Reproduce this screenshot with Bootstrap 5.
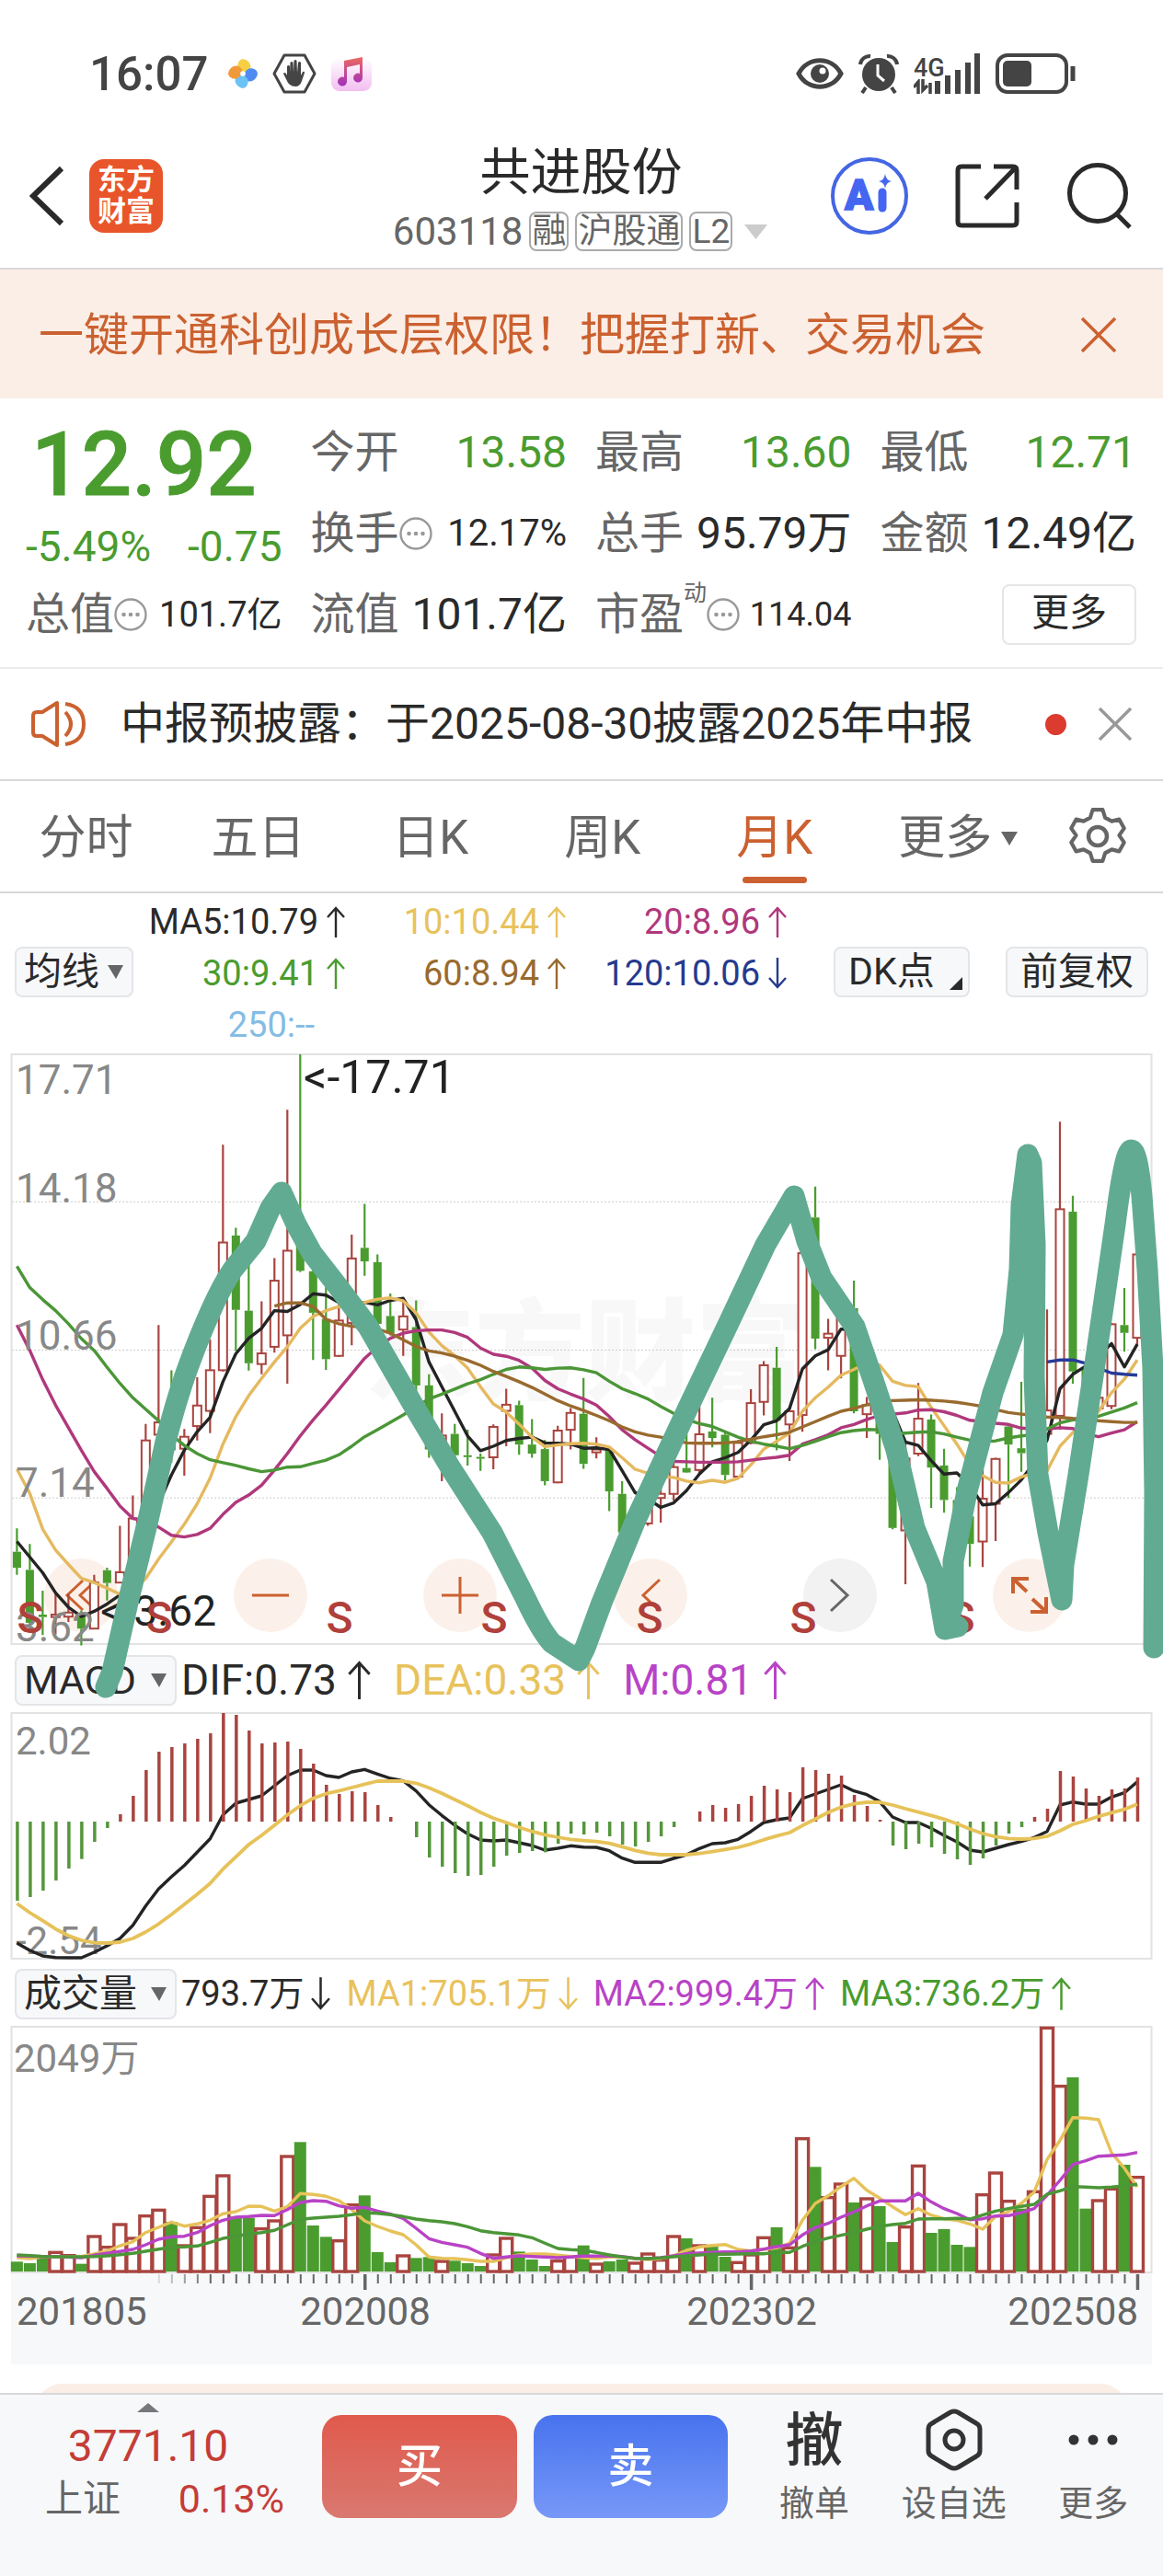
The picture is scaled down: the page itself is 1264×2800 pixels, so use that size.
<!DOCTYPE html>
<html lang="zh-CN">
<head>
<meta charset="utf-8">
<meta name="viewport" content="width=device-width, initial-scale=1">
<title>共进股份 603118</title>
<link href="https://cdn.jsdelivr.net/npm/bootstrap@5.3.0/dist/css/bootstrap.min.css" rel="stylesheet">
<style>
  :root { --up:#a9443f; --down:#4a9c2f; --brand:#cb6130; --ink:#2a2a2a; --mute:#666; --soft:#f7f8fa; }
  body { font-family: Roboto, "Noto Sans CJK SC", sans-serif; color: var(--ink); background: #fff; font-size: 48px; line-height: 1; }
  svg { display: block; flex: none; }
  button { color: inherit; }
  .plain-btn { background: none; border: 0; padding: 0; }
  .c-down { color: var(--down); } .c-mute { color: var(--mute); } .c-brand { color: var(--brand); }
  .c-yel { color: #e8c25c; } .c-mag { color: #b0387c; } .c-brn { color: #996a2e; }
  .c-blu { color: #263a8e; } .c-sky { color: #84bce4; } .c-pur { color: #b843c6; }

  .status { height: 134px; padding: 26px 94px 0 97px; font-size: 51px; color: #444; }
  .clock { font-weight: 500; margin-right: 22px; }
  .net { font-size: 27px; line-height: 24px; font-weight: 500; width: 31px; }

  .topbar { display: grid; grid-template-columns: 1fr auto 1fr; height: 159px; border-bottom: 2px solid #d8d8da; padding: 0 33px 0 32px; }
  .top-tools { gap: 51px; }
  .stock-name { font-size: 55px; line-height: 64px; font-weight: 400; margin: 0; }
  .stock-head { padding-top: 12px; }
  .stock-sub { font-size: 42px; line-height: 62px; color: var(--mute); gap: 7px; padding-top: 2px; }
  .tagbox { font-size: 37px; line-height: 39px; border: 2px solid #aaa; border-radius: 8px; padding: 0 1px; }
  .logo { width: 80px; height: 80px; border-radius: 16px; background: #e9552a; color: #fff; font-size: 31px; line-height: 34px; font-weight: 700; margin-left: 25px; }

  .promo { height: 140px; background: #fbeee6; color: var(--brand); font-size: 49px; padding: 2px 51px 0 42px; }

  .quote { display: grid; grid-template-columns: repeat(4, 1fr); grid-auto-rows: 88px; column-gap: 31px; padding: 15px 29px 13px 28px; border-bottom: 2px solid #ebebeb; }
  .headline { grid-row: span 2; }
  .price { font-size: 96px; line-height: 114px; font-weight: 500; padding-left: 6px; -webkit-text-stroke: 1px currentColor; }
  .chg { font-size: 46px; line-height: 64px; }
  .cell-q { display: flex; align-items: center; justify-content: space-between; white-space: nowrap; }
  .cell-q .lab { color: var(--mute); display: flex; align-items: center; }
  .v-m { font-size: 40px; } .v-s { font-size: 38px; } .v-xs { font-size: 36px; }
  .sup-d { font-size: 25px; align-self: flex-start; margin-top: -12px; }
  .more-btn { font-size: 41px; width: 146px; height: 66px; border: 2px solid #e6e6e6; border-radius: 8px; background: #fff; padding: 0 0 4px; margin-left: auto; }

  .notice { height: 122px; border-bottom: 2px solid #d8d8d8; padding: 0 34px 0 33px; font-size: 48px; }
  .notice-text { padding-left: 34px; }
  .dot { width: 23px; height: 23px; border-radius: 50%; background: #dc3b30; margin-right: 35px; }

  .tabs { height: 122px; border-bottom: 2px solid #d8d8d8; font-size: 51px; padding-right: 25px; }
  .tabs a { color: var(--mute); text-decoration: none; text-align: center; position: relative; line-height: 116px; padding-top: 4px; white-space: nowrap; }
  .tabs .tab-p { flex: 0 0 15.1%; }
  .tabs a.on { color: var(--brand); }
  .tabs a.on::after { content: ""; position: absolute; left: 50%; margin-left: -35px; bottom: 9px; width: 70px; height: 7px; border-radius: 4px; background: var(--brand); }
  .tabs .tab-more { flex: 1 1 auto; display: flex; align-items: center; justify-content: center; gap: 10px; }
  .tri { border: 9px solid transparent; border-bottom: 0; border-top: 15px solid var(--mute); }

  .ma { height: 171px; padding: 3px 16px 0; font-size: 38px; line-height: 56px; }
  .ma-grid { display: grid; grid-template-columns: 230px 240px 240px; text-align: right; }
  .ma-grid span, .ind span { display: inline-flex; align-items: center; justify-content: flex-end; white-space: nowrap; }
  .ma-grid span { gap: 9px; }
  .ma-grid .no-arrow { padding-right: 33px; }
  .chip { background: var(--soft); border: 2px solid #e3e5e8; border-radius: 8px; height: 55px; font-size: 41px; line-height: 48px; padding: 0 14px; color: var(--ink); white-space: nowrap; }
  select.chip { appearance: none; padding: 0 0 0 8px; background: var(--soft) url("data:image/svg+xml,%3Csvg xmlns='http://www.w3.org/2000/svg' width='17' height='15'%3E%3Cpath d='M0 0h17l-8 15z' fill='%23666'/%3E%3C/svg%3E") no-repeat right 9px center; }
  .chip-ma { width: 129px; }
  .chip-ind { width: 176px; margin-right: 5px; }
  .chip-gap { margin-right: 39px; }
  .dk { position: relative; width: 148px; text-align: left; }
  .dk::after { content: ""; position: absolute; right: 6px; bottom: 6px; border-left: 14px solid transparent; border-bottom: 14px solid #2a2a2a; }

  .plot { position: relative; }
  .plot > svg { width: 100%; height: auto; position: relative; z-index: 1; pointer-events: none; }
  .plot .scribble { position: absolute; top: 0; left: 0; z-index: 3; }
  .tools { position: absolute; left: 48px; right: 105px; bottom: 18px; display: flex; justify-content: space-between; }
  .tools button { width: 80px; height: 80px; border-radius: 50%; border: 0; background: #fbf1ea; color: var(--brand); padding: 0; display: flex; align-items: center; justify-content: center; }
  .tools button.off { background: #f2f2f2; color: #666; }
  .ind { height: 68px; padding-left: 16px; }
  .ind-macd { font-size: 46px; } .ind-macd span { gap: 12px; margin-right: 25px; }
  .ind-macd select { font-size: 43px; }
  .ind-vol { height: 66px; font-size: 38px; } .ind-vol span { gap: 8px; margin-right: 17px; }

  .peek { padding: 21px 38px 0; overflow: hidden; height: 31px; }
  .peek div { height: 60px; border-radius: 30px; background: #fbeee6; }
  .dock { height: 199px; background: var(--soft); border-top: 2px solid #d8d8da; }
  .dock-index { width: 27.7%; padding: 9px 41px 0 49px; color: #c43d37; }
  .dock-last { width: 224px; text-align: center; line-height: 74px; }
  .dock-last::before { content: ""; display: block; width: 24px; margin: 0 auto; border: 12px solid transparent; border-top: 0; border-bottom: 10px solid #77787c; }
  .dock-row { line-height: 40px; font-size: 43px; }
  .dock-row .c-mute { font-size: 41px; }
  .trade { border: 0; border-radius: 21px; height: 112px; margin-top: 22px; color: #fff; font-size: 50px; font-weight: 500; flex: 1; padding: 0; }
  .buy { background: linear-gradient(#e05a4c, #d97870); margin-right: 18px; }
  .sell { background: linear-gradient(#4873ee, #7798f8); }
  .dock-tools { width: 37.4%; padding: 15px 0 0 18px; color: var(--mute); font-size: 38px; }
  .dock-tools button { flex: 1; display: flex; flex-direction: column; align-items: center; }
  .dock-tools .glyph { height: 68px; display: flex; align-items: center; font-size: 63px; font-weight: 500; color: #333; margin-bottom: 16px; }
</style>
<script src="https://cdn.jsdelivr.net/npm/bootstrap@5.3.0/dist/js/bootstrap.bundle.min.js"></script>
</head>
<body>
<svg width="0" height="0" class="position-absolute" aria-hidden="true">
  <symbol id="up" viewBox="0 0 20 34"><path d="M10 34V2M1 12L10 2l9 10" fill="none" stroke="currentColor" stroke-width="2.4"/></symbol>
  <symbol id="dn" viewBox="0 0 20 34"><path d="M10 0v32M1 22l9 10 9-10" fill="none" stroke="currentColor" stroke-width="2.4"/></symbol>
  <symbol id="info" viewBox="0 0 36 36"><circle cx="18" cy="18" r="16.5" fill="none" stroke="#999" stroke-width="2.4"/><g fill="#999"><circle cx="10.500" cy="18" r="2.300"/><circle cx="18" cy="18" r="2.300"/><circle cx="25.500" cy="18" r="2.300"/></g></symbol>
</svg>

<div class="status d-flex align-items-center justify-content-between">
  <div class="d-flex align-items-center">
    <span class="clock">16:07</span>
    <svg width="32" height="34" viewBox="-17 -18 34 36" class="me-3"><path d="M5 -1C-4 -1 -9 -8 -4 -15 0 -20 9 -14 9 -8 9 -5 7 -2 5 -1z" fill="#f6cf45"/><path d="M1 5C1 -4 8 -9 15 -4 20 0 14 9 8 9 5 9 2 7 1 5z" fill="#4f8cf2"/><path d="M-5 1C4 1 9 8 4 15 0 20 -9 14 -9 8 -9 5 -7 2 -5 1z" fill="#6cc2f4"/><path d="M-1 -5C-1 4 -8 9 -15 4 -20 0 -14 -9 -8 -9 -5 -9 -2 -7 -1 -5z" fill="#f19a3a"/><circle r="3" fill="#fff"/></svg>
    <svg width="48" height="44" viewBox="0 0 48 44" class="me-3"><path d="M13 2h22l11 20-11 20H13L2 22z" fill="none" stroke="#444" stroke-width="3" stroke-linejoin="round"/><path d="M16 24V14q1.500-2 3 0v8l.5-12q1.500-2 3 0l.5 11 .5-13q1.500-2 3 0l.5 13 1-11q1.500-2 3 0v14l2-4q2-1 2 1l-3 9q-2 6-7 6-7 0-10-8l-3-6q1-2 3 0z" fill="#444"/></svg>
    <svg width="44" height="38" viewBox="0 0 44 38"><defs><linearGradient id="mb" x1="0" y1="0" x2="0" y2="1"><stop offset="0" stop-color="#fff"/><stop offset="1" stop-color="#f3bdf0"/></linearGradient><linearGradient id="mn" x1="0" y1="0" x2="0" y2="1"><stop offset="0" stop-color="#ee6a5e"/><stop offset="1" stop-color="#a02fc0"/></linearGradient></defs><rect y="2" width="44" height="36" rx="9" fill="url(#mb)"/><path d="M14 5L34 1v22a5 5 0 1 1-3-4V9L17 12v15a5 5 0 1 1-3-4z" fill="url(#mn)"/></svg>
  </div>
  <div class="d-flex align-items-center">
    <svg width="52" height="36" viewBox="0 0 52 36" class="me-3"><path d="M3 18C13-1 39-1 49 18 39 37 13 37 3 18z" fill="none" stroke="#444" stroke-width="5"/><circle cx="26" cy="18" r="10" fill="#444"/><circle cx="29" cy="15" r="3.500" fill="#fff"/></svg>
    <svg width="44" height="44" viewBox="0 0 44 44" class="me-3"><circle cx="22" cy="23" r="18" fill="#444"/><path d="M2 12A10 10 0 0 1 13 3M42 12A10 10 0 0 0 31 3M8 37l-4 6M36 37l4 6" stroke="#444" stroke-width="4" fill="none"/><path d="M21 12v12l7 6" stroke="#fff" stroke-width="3" fill="none"/></svg>
    <div class="me-3 d-flex align-items-end">
      <div><div class="net">4G</div><svg width="22" height="16" viewBox="0 0 22 16"><path d="M5 16V3L0 9M10 0v12l5-5M18 4v12" stroke="#444" stroke-width="3.500" fill="none"/></svg></div>
      <svg width="42" height="44" viewBox="10 0 42 44" overflow="visible"><path d="M5 44V30M16 44V24M27 44V18M38 44V10M48 44V0" stroke="#444" stroke-width="6"/></svg>
    </div>
    <svg width="88" height="44" viewBox="0 0 88 44"><rect x="2" y="2" width="75" height="40" rx="11" fill="none" stroke="#444" stroke-width="4"/><rect x="8" y="8" width="31" height="28" rx="5" fill="#444"/><path d="M84 14v16" stroke="#444" stroke-width="5"/></svg>
  </div>
</div>

<header class="topbar">
  <div class="d-flex align-items-center">
    <button class="plain-btn" aria-label="返回"><svg width="40" height="66" viewBox="0 0 40 66"><path d="M35 3L4 33l31 30" fill="none" stroke="#2a2a2a" stroke-width="6"/></svg></button>
    <div class="logo text-center d-flex flex-column justify-content-center"><span>东方</span><span>财富</span></div>
  </div>
  <div class="stock-head d-flex flex-column align-items-center justify-content-center">
    <h1 class="stock-name">共进股份</h1>
    <div class="stock-sub d-flex align-items-center"><span>603118</span><span class="tagbox">融</span><span class="tagbox">沪股通</span><span class="tagbox">L2</span>
      <svg width="33" height="16" viewBox="-6 0 33 16"><path d="M0 0h25L12.500 16z" fill="#ccc"/></svg></div>
  </div>
  <div class="top-tools d-flex align-items-center justify-content-end">
    <button class="plain-btn" aria-label="Ai"><svg width="84" height="86" viewBox="1 0 84 86"><circle cx="43" cy="43" r="40" fill="#fff" stroke="#4466e4" stroke-width="4"/><text x="16" y="58" font-size="46" font-weight="900" fill="#4466f0" stroke="#4466f0" stroke-width="1.500">A</text><path d="M57 39v17" stroke="#4466f0" stroke-width="9" stroke-linecap="round"/><path d="M60 19q1 7 7 8-6 1-7 8-1-7-7-8 6-1 7-8z" fill="#4466f0"/></svg></button>
    <button class="plain-btn" aria-label="分享"><svg width="70" height="70" viewBox="0 0 70 70" fill="none" stroke="#2a2a2a" stroke-width="5"><path d="M28 3H7q-4 0-4 4v56q0 4 4 4h56q4 0 4-4V42M42 3h21q4 0 4 4v21M65 5L33 38"/></svg></button>
    <button class="plain-btn" aria-label="搜索"><svg width="72" height="72" viewBox="0 0 72 72" fill="none" stroke="#2a2a2a" stroke-width="5"><circle cx="34" cy="33" r="30.500"/><path d="M54 55l15 15"/></svg></button>
  </div>
</header>

<div class="promo d-flex align-items-center justify-content-between">
  <span>一键开通科创成长层权限！把握打新、交易机会</span>
  <button class="plain-btn" aria-label="关闭"><svg width="38" height="38" viewBox="0 0 38 38"><path d="M1 1l36 36M37 1L1 37" stroke="#cb6130" stroke-width="3.500"/></svg></button>
</div>

<section class="quote">
  <div class="headline c-down"><div class="price">12.92</div><div class="chg d-flex justify-content-between"><span>-5.49%</span><span>-0.75</span></div></div>
  <div class="cell-q"><span class="lab">今开</span><span class="c-down">13.58</span></div>
  <div class="cell-q"><span class="lab">最高</span><span class="c-down">13.60</span></div>
  <div class="cell-q"><span class="lab">最低</span><span class="c-down">12.71</span></div>
  <div class="cell-q"><span class="lab">换手<svg width="36" height="36"><use href="#info"/></svg></span><span class="v-m">12.17%</span></div>
  <div class="cell-q"><span class="lab">总手</span><span>95.79万</span></div>
  <div class="cell-q"><span class="lab">金额</span><span>12.49亿</span></div>
  <div class="cell-q"><span class="lab">总值<svg width="36" height="36"><use href="#info"/></svg></span><span class="v-s">101.7亿</span></div>
  <div class="cell-q"><span class="lab">流值</span><span>101.7亿</span></div>
  <div class="cell-q"><span class="lab">市盈<span class="sup-d">动</span><svg width="36" height="36"><use href="#info"/></svg></span><span class="v-xs">114.04</span></div>
  <div class="cell-q"><button class="more-btn">更多</button></div>
</section>

<div class="notice d-flex align-items-center">
  <svg width="64" height="52" viewBox="0 0 64 52" fill="none" stroke="#cb6130" stroke-width="4" stroke-linejoin="round"><path d="M3 17q0-4 4-4h6L29 3v46L13 39H7q-4 0-4-4z"/><path d="M38 13q12 13 0 26M38 4q20 3 20 22T38 48"/></svg>
  <span class="notice-text flex-grow-1">中报预披露：于2025-08-30披露2025年中报</span>
  <span class="dot flex-shrink-0"></span>
  <button class="plain-btn" aria-label="关闭"><svg width="36" height="36" viewBox="0 0 36 36"><path d="M1 1l34 34M35 1L1 35" stroke="#999" stroke-width="3.500"/></svg></button>
</div>

<nav class="tabs d-flex align-items-center">
  <a href="#" class="tab-p">分时</a><a href="#" class="tab-p">五日</a><a href="#" class="tab-p">日K</a><a href="#" class="tab-p">周K</a><a href="#" class="tab-p on">月K</a>
  <a href="#" class="tab-more">更多<i class="tri"></i></a>
  <button class="plain-btn" aria-label="设置"><svg width="92" height="62" viewBox="-46 -31 92 62" fill="none" stroke="#666" stroke-width="4.500" stroke-linejoin="round"><path d="M-6-29H6l3 9 8 4 9-2 6 10-6 8 6 8-6 10-9-2-8 4-3 9H-6l-3-9-8-4-9 2-6-10 6-8-6-8 6-10 9 2 8-4z" transform="translate(0 -1) scale(.9 .96)"/><circle r="10"/></svg></button>
</nav>

<section class="ma d-flex">
  <div class="d-flex align-items-center pb-1"><select class="chip chip-ma" aria-label="均线"><option>均线</option></select></div>
  <div class="ma-grid flex-grow-1">
    <span>MA5:10.79<svg width="20" height="34"><use href="#up"/></svg></span><span class="c-yel">10:10.44<svg width="20" height="34"><use href="#up"/></svg></span><span class="c-mag">20:8.96<svg width="20" height="34"><use href="#up"/></svg></span>
    <span class="c-down">30:9.41<svg width="20" height="34"><use href="#up"/></svg></span><span class="c-brn">60:8.94<svg width="20" height="34"><use href="#up"/></svg></span><span class="c-blu">120:10.06<svg width="20" height="34"><use href="#dn"/></svg></span>
    <span class="c-sky no-arrow">250:--</span>
  </div>
  <div class="d-flex align-items-center pb-1"><button class="chip dk chip-gap">DK点</button><button class="chip">前复权</button></div>
</section>

<div class="plot">
  <div class="plot">
    <div class="tools">
      <button aria-label="最早"><svg width="36" height="36" viewBox="0 0 36 36" fill="none" stroke="currentColor" stroke-width="3"><path d="M20 2L3 18l17 16M34 2L17 18l17 16"/></svg></button>
      <button aria-label="缩小"><svg width="40" height="36" viewBox="0 0 40 36"><path d="M0 18h40" stroke="currentColor" stroke-width="3"/></svg></button>
      <button aria-label="放大"><svg width="40" height="40" viewBox="0 0 40 40"><path d="M0 20h40M20 0v40" stroke="currentColor" stroke-width="3"/></svg></button>
      <button aria-label="左移"><svg width="24" height="38" viewBox="0 0 24 38"><path d="M22 2L4 19l18 17" fill="none" stroke="currentColor" stroke-width="3"/></svg></button>
      <button class="off" aria-label="右移"><svg width="24" height="38" viewBox="0 0 24 38"><path d="M2 2l18 17L2 36" fill="none" stroke="currentColor" stroke-width="3"/></svg></button>
      <button aria-label="全屏"><svg width="42" height="42" viewBox="0 0 42 42" fill="none" stroke="currentColor" stroke-width="4"><path d="M3 19V3h17M3 3l15 14M39 23v16H22M39 39L24 25"/></svg></button>
    </div>
    <svg id="kline" viewBox="0 12 1264 650" role="img" aria-label="月K线"></svg>
  </div>
  <div class="ind ind-macd d-flex align-items-center">
    <select class="chip chip-ind" aria-label="指标"><option>MACD</option></select>
    <span>DIF:0.73<svg width="25" height="42"><use href="#up"/></svg></span>
    <span class="c-yel">DEA:0.33<svg width="25" height="42"><use href="#up"/></svg></span>
    <span class="c-pur">M:0.81<svg width="25" height="42"><use href="#up"/></svg></span>
  </div>
  <svg class="scribble" viewBox="0 1142 1264 718" fill="none" stroke="#62ab93" stroke-width="23" stroke-linecap="round" stroke-linejoin="round" aria-hidden="true">
    <path d="M115 1834L122 1817 139 1742 161 1652 180 1567Q192 1520 204 1487T229 1425 253 1380L278 1349 294 1313 306 1296 322 1331 339 1362 367 1398 400 1442 449 1527 490 1596 535 1666 571 1737Q588 1773 600 1786L629 1805 636 1791 654 1742 691 1652 747 1532 792 1438 832 1353 863 1300 877 1349 893 1389 929 1442 949 1500 974 1576 994 1661 1018 1719 1027 1771 1041 1768 1030 1762 1036 1744V1697L1051 1621 1079 1514 1101 1451 1108 1380 1110 1310 1117 1255 1121 1264 1125 1353 1124 1496 1128 1603 1139 1666 1154 1739 1156 1701 1172 1603 1192 1469 1212 1331Q1222 1252 1229 1250T1241 1300L1247 1380 1253 1487 1255 1621 1254 1791"/>
  </svg>
</div>
<div class="plot"><svg id="macd" viewBox="0 1860 1264 274" role="img" aria-label="MACD"></svg></div>

<div class="ind ind-vol d-flex align-items-center">
  <select class="chip chip-ind" aria-label="副图"><option>成交量</option></select>
  <span>793.7万<svg width="21" height="40"><use href="#dn"/></svg></span>
  <span class="c-yel">MA1:705.1万<svg width="21" height="40"><use href="#dn"/></svg></span>
  <span class="c-pur">MA2:999.4万<svg width="21" height="40"><use href="#up"/></svg></span>
  <span class="c-down">MA3:736.2万<svg width="21" height="40"><use href="#up"/></svg></span>
</div>
<div class="plot"><svg id="vol" viewBox="0 2200 1264 370" role="img" aria-label="成交量"></svg></div>

<div class="peek"><div></div></div>
<footer class="dock d-flex">
  <div class="dock-index">
    <div class="dock-last">3771.10</div>
    <div class="dock-row d-flex justify-content-between align-items-center"><span class="c-mute">上证</span><span>0.13%</span></div>
  </div>
  <button class="trade buy">买</button>
  <button class="trade sell">卖</button>
  <div class="dock-tools d-flex">
    <button class="plain-btn c-mute"><span class="glyph">撤</span>撤单</button>
    <button class="plain-btn c-mute"><span class="glyph"><svg width="62" height="68" viewBox="0 0 62 68" fill="none" stroke="#333" stroke-width="5" stroke-linejoin="round"><path d="M27 4q4-2 8 0l20 12q4 2 4 6v24q0 4-4 6L35 64q-4 2-8 0L7 52q-4-2-4-6V22q0-4 4-6z"/><circle cx="31" cy="34" r="10"/></svg></span>设自选</button>
    <button class="plain-btn c-mute"><span class="glyph"><svg width="54" height="12" viewBox="0 0 54 12" fill="#333"><circle cx="6" cy="6" r="5.500"/><circle cx="27" cy="6" r="5.500"/><circle cx="48" cy="6" r="5.500"/></svg></span>更多</button>
  </div>
</footer>

<script>
const X = i => 18.4 + 13.995 * i;
const UP = '#a9443f', DOWN = '#4a9c2f';
const line = (a, y, col, w = 3.4, from = 0) =>
  `<polyline points="${a.map((v, i) => X(i + from).toFixed(1) + ',' + y(v).toFixed(1)).join(' ')}" fill="none" stroke="${col}" stroke-width="${w}" stroke-linejoin="round"/>`;
const label = (t, x, y, size, col = '#888', extra = '') => `<text x="${x}" y="${y}" font-size="${size}" fill="${col}" ${extra}>${t}</text>`;
const frame = (y1, y2) => `<rect x="12.500" y="${y1}" width="1239" height="${y2 - y1}" fill="none" stroke="#e2e2e2" stroke-width="2"/>`;

/* monthly candles 201805-202508: high, body top, body bottom, low, falling flag */
const K = [[1190,1247,1286,1303,1],[1228,1291,1420,1440,1],[1342,1400,1406,1450,1],[1345,1400,1406,1448,0],[1350,1395,1405,1418,0],[1390,1405,1434,1475,1],[1303,1322,1434,1436,0],[1286,1292,1323,1366,1],[1184,1297,1322,1324,0],[1110,1166,1300,1310,0],[936,976,1200,1210,0],[695,932,962,964,0],[805,940,1000,1030,1],[948,967,996,1062,0],[822,891,941,976,0],[730,805,904,958,0],[256,494,805,808,0],[458,477,658,758,1],[530,660,788,806,1],[637,764,790,815,0],[532,587,748,762,0],[171,514,720,838,0],[36,440,563,566,1],[560,564,665,780,1],[600,680,778,804,1],[640,684,770,773,0],[475,533,690,744,0],[400,507,540,575,1],[523,542,692,700,1],[618,673,715,720,1],[630,674,706,770,0],[635,700,842,860,1],[815,842,998,1018,1],[910,964,1000,1075,0],[936,960,1012,1015,1],[950,1012,1016,1037,1],[1008,1016,1020,1050,1],[937,943,1017,1046,0],[850,889,904,990,0],[879,890,986,1011,1],[924,986,1008,1018,1],[975,997,1075,1085,1],[940,952,1078,1080,0],[897,909,950,998,0],[824,911,1033,1045,1],[968,998,1005,1020,0],[995,1000,1100,1148,1],[1075,1106,1200,1210,1],[1150,1180,1210,1220,1],[1120,1140,1178,1184,0],[1090,1106,1116,1176,0],[1010,1041,1106,1122,0],[850,1043,1054,1055,1],[890,961,1048,1055,0],[872,954,970,993,1],[955,962,1060,1073,1],[975,982,1064,1067,0],[851,885,982,985,0],[783,793,882,915,0],[748,799,928,1000,1],[898,905,937,1026,0],[500,520,914,955,0],[358,433,728,754,1],[680,716,726,805,0],[609,658,770,825,0],[587,654,905,910,1],[870,890,912,970,0],[790,853,960,1023,1],[940,942,1189,1192,1],[980,1020,1195,1326,0],[836,923,1008,1014,0],[913,925,1042,1140,1],[996,1037,1121,1152,1],[1090,1121,1170,1180,1],[1160,1161,1228,1283,1],[1045,1118,1222,1284,0],[1018,1021,1130,1221,0],[935,942,986,1116,1],[833,995,1007,1052,1],[900,920,990,1000,0],[657,903,960,975,0],[200,413,916,950,0],[380,419,808,838,1],[795,800,900,910,1],[860,872,898,900,0],[690,693,892,900,0],[605,695,714,760,1],[510,523,726,745,0]];
const ma5 = [1222,1260,1298,1347,1382,1405,1392,1374,1352,1300,1215,1130,1060,1000,955,920,833,765,727,703,660,662,645,619,622,640,645,640,646,635,630,682,785,845,905,965,1001,990,976,971,968,982,983,985,995,994,998,1050,1103,1118,1139,1128,1098,1058,1028,1018,1005,975,938,928,898,802,770,755,705,705,770,812,905,980,988,1025,1058,1055,1085,1133,1130,1103,1072,1030,975,850,815,795,770,740,797,742];
const ma10 = [1046,1105,1192,1243,1278,1312,1322,1336,1350,1340,1312,1265,1223,1180,1130,1068,985,918,867,825,785,748,703,674,660,650,648,640,632,629,636,665,712,745,770,800,845,887,907,936,968,991,987,984,983,985,992,1018,1046,1056,1065,1066,1075,1079,1073,1078,1068,1035,997,978,958,905,872,846,817,803,788,793,832,842,845,895,940,985,1035,1062,1078,1080,1065,1055,1050,990,957,935,905,860,827,780];
const ma20 = [695,757,828,890,945,1000,1052,1093,1136,1166,1172,1187,1207,1211,1205,1190,1156,1127,1109,1085,1048,1008,965,926,890,852,814,776,748,727,715,709,707,707,713,725,751,766,771,781,800,830,850,863,875,890,918,950,974,995,1015,1027,1028,1029,1029,1029,1028,1024,1020,1017,1012,985,974,962,945,937,925,915,912,909,902,901,906,915,927,930,934,937,946,948,948,945,947,960,967,958,950,930];
const ma30 = [552,604,633,660,692,728,757,798,837,872,900,928,962,988,1008,1023,1030,1037,1045,1052,1048,1041,1040,1032,1024,1011,990,967,950,932,914,893,875,863,851,838,828,815,803,797,799,803,800,799,804,811,832,850,862,875,893,910,925,935,942,955,968,978,985,990,996,988,978,967,957,952,949,950,958,958,956,955,960,968,975,978,977,970,965,962,948,933,926,924,917,907,897,884];
const ma60 = [649,641,641,650,681,692,698,700,705,715,731,747,758,763,771,781,793,808,820,833,847,863,879,892,903,915,928,943,955,963,968,974,982,983,983,982,979,973,967,962,956,943,930,917,905,898,889,882,879,878,877,878,880,883,888,893,901,908,912,915,919,920,922,923,928,930,932,932];
const ma120 = [785,780,780,788,800,812,815,817];
const py = v => v / 2.24;
let s = label('东方财富', 396, 383, 120, '#f8f8f8', 'font-weight="900"') + frame(16, 657);
[395, 756, 1116].forEach(v => s += `<path d="M13 ${py(v)}H1251" stroke="#ccc" stroke-width="1" stroke-dasharray="2 2"/>`);
K.forEach(([h, t, b, l, d], i) => {
  const x = X(i), c = d ? DOWN : UP;
  s += `<path d="M${x} ${py(h)}V${py(t)}M${x} ${py(b)}V${py(l)}" stroke="${c}" stroke-width="2.200"/>`;
  s += d ? `<rect x="${x - 4.5}" y="${py(t)}" width="9" height="${Math.max(2, py(b - t))}" fill="${c}"/>`
         : `<rect x="${x - 4.5}" y="${py(t)}" width="9" height="${py(b - t)}" fill="#fff" stroke="${c}" stroke-width="2"/>`;
});
s += line(ma5, py, '#242424') + line(ma10, py, '#e5b95f') + line(ma20, py, '#b0387c') + line(ma30, py, '#4b9637') + line(ma60, py, '#996a2e', 3.4, 20) + line(ma120, py, '#263a9a', 3.4, 80);
[['17.71', 59], ['14.18', 177], ['10.66', 337], ['7.14', 497], ['3.62', 654]].forEach(([t, y]) => s += label(t, 17, y, 44));
s += label('&lt;-17.71', 330, 58, 50, '#222') + label('&lt;-3.62', 235, 637, 46, '#222', 'text-anchor="end"');
[33, 173, 369, 537, 706, 873, 1045].forEach(x => s += label('S', x, 645, 48, '#b0403a', 'font-weight="500" text-anchor="middle"'));
document.getElementById('kline').innerHTML = s;

/* MACD histogram ends plus both signal lines; zero sits at 570 */
const hist = [828,816,795,762,723,692,636,591,546,486,402,342,327,315,300,282,216,222,273,315,312,309,333,381,450,480,471,474,516,555,570,621,687,717,738,747,744,717,681,672,666,670,642,609,612,606,618,645,651,636,618,588,570,537,516,525,513,486,453,465,474,393,402,414,420,483,519,564,648,660,642,654,675,693,711,690,648,609,588,555,528,405,423,462,486,465,462,426];
const dif = [966,990,1008,1013,1014,1014,996,975,951,908,845,790,750,713,670,626,548,510,498,486,453,420,402,402,420,426,408,400,415,429,437,470,515,550,582,610,630,633,630,639,648,663,657,649,653,654,665,689,703,703,703,690,678,658,642,639,628,602,573,564,558,495,480,465,450,470,482,505,555,573,573,592,615,636,663,669,657,645,635,622,602,516,506,513,513,490,476,440];
const dea = [837,867,893,920,942,957,965,966,963,951,930,904,873,840,807,772,725,685,645,615,582,548,518,494,479,470,459,448,438,438,438,445,460,478,498,518,540,559,573,589,602,613,621,628,632,635,641,652,664,673,678,678,678,674,668,661,654,643,629,617,606,583,562,540,523,512,507,507,516,528,539,550,562,577,594,609,619,625,627,625,618,600,579,567,553,541,530,513];
const my = v => 1790 + v / 3;
s = frame(1862, 2129) + label('2.02', 17, 1907, 42) + label('-2.54', 17, 2124, 42);
s += line(dif, my, '#242424');
hist.forEach((v, i) => s += `<path d="M${X(i) + .5} ${my(570)}V${my(v)}" stroke="${v < 570 ? UP : '#55963c'}" stroke-width="3.500"/>`);
s += line(dea, my, '#e6c259', 3.8);
document.getElementById('macd').innerHTML = s;

/* volume bar tops, negative when the month closed lower */
const V = [-985,-990,-972,955,965,-992,903,938,864,909,836,817,-855,933,874,772,705,-838,-842,878,852,642,-595,-867,-904,917,800,-769,-954,-987,966,-973,-970,984,-982,-990,-999,963,909,-952,-978,-999,983,968,-932,993,-984,-978,990,960,980,903,-909,933,-936,-969,988,963,907,-873,940,584,-676,776,732,-792,780,-804,-921,872,673,-891,-879,-930,-937,767,696,788,-812,757,223,413,-384,-812,786,748,-669,710];
const v1 = [972,975,969,970,970,968,960,950,933,920,890,873,856,869,862,850,829,822,804,805,820,806,763,766,772,786,815,852,870,885,897,930,970,974,975,979,984,984,972,963,960,960,964,968,972,974,970,970,975,978,975,965,948,937,932,929,945,950,945,940,925,850,795,770,740,713,752,778,806,832,812,833,845,850,862,879,838,822,795,758,652,590,515,517,522,630,680,742];
const v2 = [966,967,968,968,970,972,964,958,952,945,930,912,904,902,890,868,850,840,838,834,835,815,792,786,788,803,811,808,820,830,844,876,910,922,930,938,958,974,970,966,968,970,972,970,967,967,966,968,974,975,972,966,959,957,955,953,953,950,944,936,930,898,874,860,840,823,803,787,787,787,762,790,812,828,848,845,836,835,825,812,768,720,668,656,641,639,637,629];
const v3 = [963,965,968,969,969,969,968,966,962,958,951,944,938,937,934,922,909,902,895,890,883,865,847,843,840,837,832,826,827,832,838,846,851,855,861,871,884,890,894,898,907,925,942,946,948,955,963,970,974,975,973,969,966,963,961,961,960,959,959,955,955,935,920,908,899,890,879,870,864,860,846,845,845,844,846,833,820,812,805,798,765,754,740,742,744,742,738,733];
const vy = v => 2130 + v / 3;
s = '<rect x="12" y="2471" width="1240" height="99" fill="#f7f8fa"/>' + frame(2203, 2470) + label('2049万', 15, 2252, 42);
V.forEach((v, i) => {
  const y = vy(Math.abs(v)), h = 2469 - y, x = X(i);
  s += v < 0 ? `<rect x="${x - 6.5}" y="${y}" width="13" height="${h}" fill="${DOWN}"/>`
             : `<rect x="${x - 6.5}" y="${y}" width="13" height="${h}" fill="#fff" stroke="${UP}" stroke-width="3.400"/>`;
});
s += line(v1, vy, '#e6c259') + line(v2, vy, '#b843c6') + line(v3, vy, '#4b9637');
for (let i = 11; i < 88; i++) {
  const major = [27, 57, 87].includes(i);
  s += `<path d="M${X(i) + .5} 2472V${major ? 2489 : 2482}" stroke="#666" stroke-width="${major ? 3.500 : 2}" opacity="${Math.min(1, (i - 10) / 5)}"/>`;
}
[['201805', 18, 'start'], ['202008', 397, 'middle'], ['202302', 817, 'middle'], ['202508', 1237, 'end']].forEach(([t, x, a]) => s += label(t, x, 2527, 42, '#666', `text-anchor="${a}"`));
document.getElementById('vol').innerHTML = s;
</script>
</body>
</html>
